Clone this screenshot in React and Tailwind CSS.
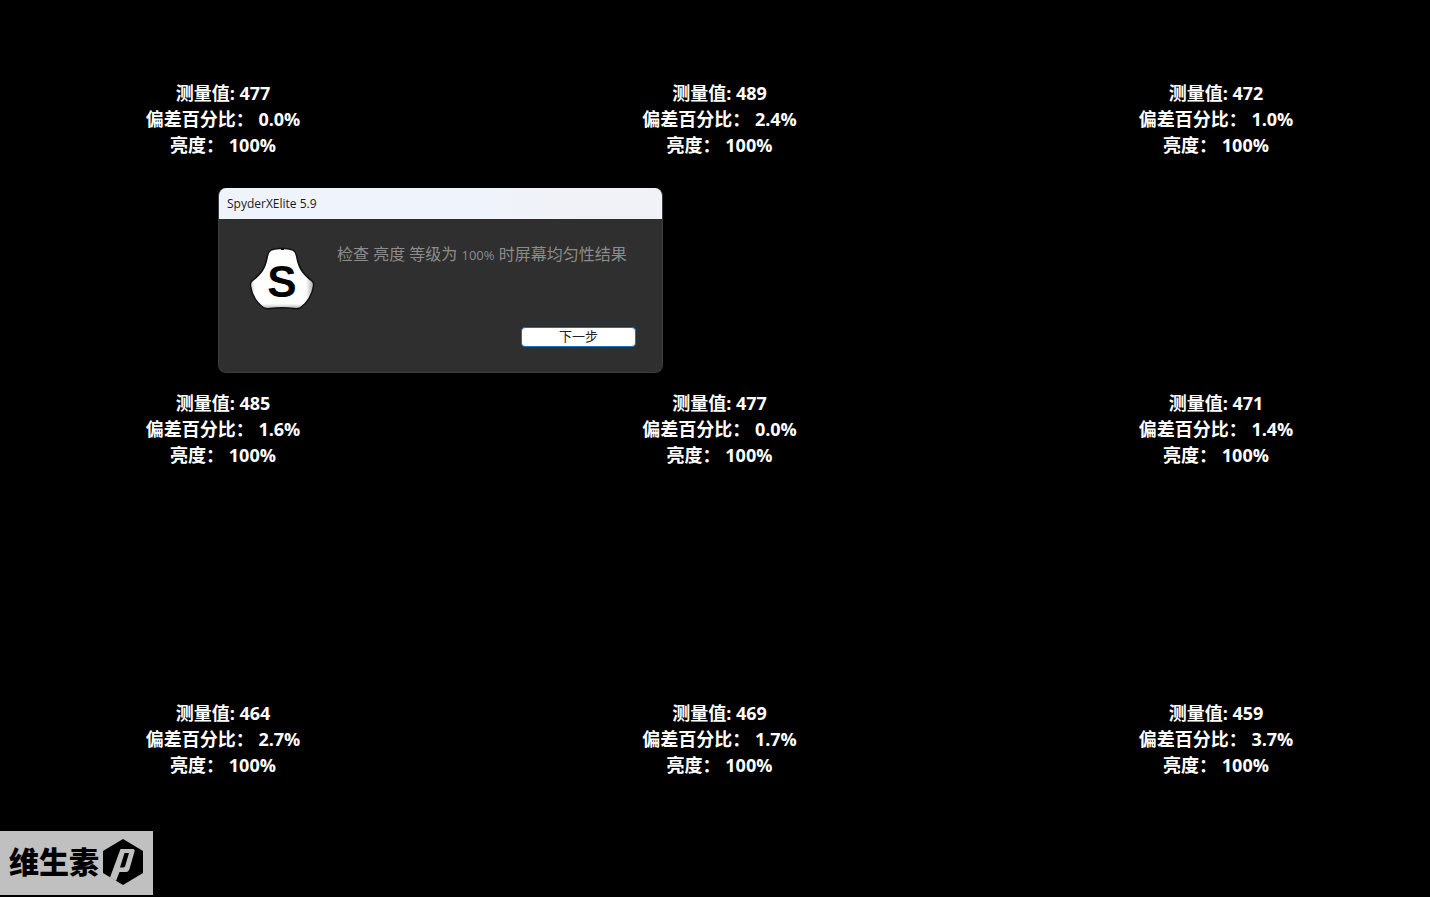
import React from 'react'

const rows = [
  [
    { value: 477, deviation: '0.0%' },
    { value: 489, deviation: '2.4%' },
    { value: 472, deviation: '1.0%' }
  ],
  [
    { value: 485, deviation: '1.6%' },
    { value: 477, deviation: '0.0%' },
    { value: 471, deviation: '1.4%' }
  ],
  [
    { value: 464, deviation: '2.7%' },
    { value: 469, deviation: '1.7%' },
    { value: 459, deviation: '3.7%' }
  ]
]

const Reading = ({ value, deviation, brightness = '100%' }) => (
  <div className="w-40 text-center text-[18px] leading-[26px] font-bold whitespace-nowrap text-white">
    <p>测量值: {value}</p>
    <p>偏差百分比： {deviation}</p>
    <p>亮度： {brightness}</p>
  </div>
)

const SpyderIcon = () => (
  <svg viewBox="0 0 66 64" className="h-16 w-[66px] shrink-0" aria-hidden="true">
    <defs>
      <linearGradient id="shell" x1="0" x2="1">
        <stop offset="0" stopColor="#c8c8c8" />
        <stop offset="0.07" stopColor="#ffffff" />
        <stop offset="0.88" stopColor="#ffffff" />
        <stop offset="1" stopColor="#a8a8a8" />
      </linearGradient>
      <linearGradient id="shade" x1="0" x2="0" y1="0" y2="1">
        <stop offset="0.92" stopColor="#aaaaaa" stopOpacity="0" />
        <stop offset="1" stopColor="#aaaaaa" />
      </linearGradient>
    </defs>
    <path
      d="M22 3 Q26 1 33 1.500 Q40 1 44 3 Q47 5 48 11 C50 21 53 26 63 34 Q65 35 64.500 39 C63 49 58 56 51 61 Q48 62 45 61.500 Q33 60 21 61.500 Q18 62 15 61 C8 56 3 49 1.500 39 Q1 35 3 34 C13 26 16 21 18 11 Q19 5 22 3Z"
      fill="url(#shell)"
    />
    <path
      d="M22 3 Q26 1 33 1.500 Q40 1 44 3 Q47 5 48 11 C50 21 53 26 63 34 Q65 35 64.500 39 C63 49 58 56 51 61 Q48 62 45 61.500 Q33 60 21 61.500 Q18 62 15 61 C8 56 3 49 1.500 39 Q1 35 3 34 C13 26 16 21 18 11 Q19 5 22 3Z"
      fill="url(#shade)"
      stroke="#111"
      strokeWidth="1.500"
    />
    <path d="M32 1h3v2h-3z" fill="#111" />
    <text
      x="33"
      y="50"
      textAnchor="middle"
      fontFamily="Liberation Sans, sans-serif"
      fontSize="44"
      fontWeight="700"
      fill="#000"
    >
      S
    </text>
  </svg>
)

const ResultDialog = () => (
  <section
    role="dialog"
    aria-labelledby="dialog-title"
    className="absolute top-[188px] left-[218px] w-[445px] overflow-hidden rounded-lg border-x border-b border-[#3c3c3c] bg-[#2f2f2f]"
  >
    <header className="flex h-[31px] items-center bg-linear-to-r from-[#eff3fb] from-60% to-[#f1f2f7] to-80% px-2">
      <h1 id="dialog-title" className="text-[12px] leading-4 text-[#1a1a1a]">SpyderXElite 5.9</h1>
    </header>
    <div className="flex gap-[22px] px-[30px] pt-7">
      <SpyderIcon />
      <p className="text-[16px] leading-[14px] whitespace-nowrap text-[#8c8c8c]">
        检查 亮度 等级为 <span className="text-[13px]">100%</span> 时屏幕均匀性结果
      </p>
    </div>
    <div className="flex justify-end pt-4 pr-[26px] pb-[25px]">
      <button
        type="button"
        className="flex h-5 w-[115px] items-center justify-center rounded border border-[#1b6fb5] bg-white pb-0.5 text-[13px] leading-4 text-[#222]"
      >
        下一步
      </button>
    </div>
  </section>
)

const Watermark = () => (
  <div className="absolute bottom-0.5 left-0 flex h-16 w-[153px] items-center gap-1 bg-[#c0c0c0] pb-0.5 pl-[9px]">
    <span className="text-[30px] leading-10 font-black text-black">维生素</span>
    <svg viewBox="0 0 40 46" className="h-[46px] w-10" aria-hidden="true">
      <path d="M20 0 40 12V34L20 46 0 34V12Z" fill="#000" />
      <path
        fillRule="evenodd"
        d="M17.500 10H30Q32 10 31.500 12.500L26.500 30Q25.500 33 23 33H16.500L13 42 7 38.500Z M21.500 14 17 28.500H20.500L22 27.500 26 14Z"
        fill="#c0c0c0"
      />
    </svg>
  </div>
)

const App = () => {
  return (
    <main className="relative min-h-screen overflow-hidden bg-black font-['Open_Sans','Noto_Sans_CJK_SC',sans-serif]">
      <div className="flex flex-col gap-[232px] pt-20 pr-[134px] pb-[118px] pl-[143px]">
        {rows.map((row, index) => (
          <div key={index} className="flex justify-between">
            {row.map((reading, i) => (
              <Reading key={i} {...reading} />
            ))}
          </div>
        ))}
      </div>
      <ResultDialog />
      <Watermark />
    </main>
  )
}

export default App
